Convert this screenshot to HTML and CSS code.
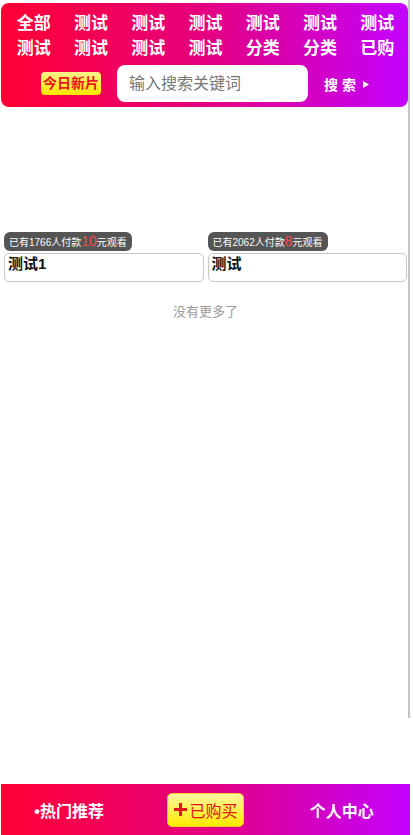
FILE: index.html
```html
<!DOCTYPE html>
<html>
<head>
  <meta charset="utf-8">
  <title>今日新片</title>
  <link rel="stylesheet" href="styles.css">
</head>
<body>
  <div class="app">
    <header class="top">
      <nav class="cats">
        <a href="#">全部</a>
        <a href="#">测试</a>
        <a href="#">测试</a>
        <a href="#">测试</a>
        <a href="#">测试</a>
        <a href="#">测试</a>
        <a href="#">测试</a>
        <a href="#">测试</a>
        <a href="#">测试</a>
        <a href="#">测试</a>
        <a href="#">测试</a>
        <a href="#">分类</a>
        <a href="#">分类</a>
        <a href="#">已购</a>
      </nav>
      <div class="search-row">
        <span class="today">今日新片</span>
        <div class="search-box">
          <input type="text" placeholder="输入搜索关键词">
        </div>
        <span class="search-btn">搜索<svg width="6" height="7" viewBox="0 0 6 7"><path d="M0 0 L6 3.5 L0 7 Z" fill="#fff"/></svg></span>
      </div>
    </header>

    <main class="list">
      <div class="cards">
        <div class="card">
          <div class="thumb"></div>
          <span class="pay-tag">已有1766人付款<em>10</em>元观看</span>
          <div class="card-title">测试1</div>
        </div>
        <div class="card">
          <div class="thumb"></div>
          <span class="pay-tag">已有2062人付款<em>8</em>元观看</span>
          <div class="card-title">测试</div>
        </div>
      </div>
      <p class="no-more">没有更多了</p>
    </main>

    <footer class="tabbar">
      <a href="#" class="tab">&bull;热门推荐</a>
      <a href="#" class="tab"><span class="buy-btn"><svg width="13" height="13" viewBox="0 0 13 13"><path d="M5 0 H8 V5 H13 V8 H8 V13 H5 V8 H0 V5 H5 Z" fill="#e0151b"/></svg>已购买</span></a>
      <a href="#" class="tab">个人中心</a>
    </footer>
  </div>
  <div class="scroll-thumb"></div>
</body>
</html>
```

FILE: styles.css
```css
html, body {
  margin: 0;
  padding: 0;
  height: 100%;
  background-color: #fff;
}

body {
  font-family: "Liberation Sans", "Noto Sans CJK SC", sans-serif;
  overflow: hidden;
}

.app {
  width: 409px;
  height: 835px;
  margin-left: 1px;
  display: flex;
  flex-direction: column;
}

a {
  text-decoration: none;
}

/* header */
.top {
  margin: 3px 2px 0 0;
  padding: 8px 2px 5px 4px;
  border-radius: 8px;
  background: linear-gradient(to right, #ff0033, #e4007f 50%, #c300ff);
  position: relative;
  z-index: 2;
}

.cats {
  display: grid;
  grid-template-columns: repeat(7, 1fr);
}

.cats a {
  color: #fff;
  font-size: 17px;
  font-weight: bold;
  line-height: 25px;
  text-align: center;
}

.search-row {
  display: flex;
  align-items: center;
  height: 37px;
  margin-top: 4px;
  padding-left: 36px;
}

.today {
  display: inline-block;
  height: 23px;
  line-height: 23px;
  padding: 0 2px;
  border-radius: 4px;
  background: linear-gradient(to bottom, #fff38a, #ffe500);
  color: #e8171b;
  font-size: 14px;
  font-weight: bold;
}

.search-box {
  width: 191px;
  height: 37px;
  margin-left: 16px;
  background-color: #fff;
  border-radius: 8px;
}

.search-box input {
  width: 100%;
  height: 100%;
  box-sizing: border-box;
  border: none;
  outline: none;
  background: transparent;
  padding: 0 12px;
  font-family: "Liberation Sans", "Noto Sans CJK SC", sans-serif;
  font-size: 16px;
}

.search-box input::placeholder {
  color: #777;
}

.search-btn {
  margin-left: 16px;
  color: #fff;
  font-size: 14px;
  font-weight: bold;
  letter-spacing: 4px;
  display: flex;
  align-items: center;
}

.search-btn svg {
  margin-left: 3px;
  margin-top: 1px;
}

/* list */
.list {
  flex: 1;
  padding: 4px 3px 0 3px;
}

.cards {
  display: grid;
  grid-template-columns: 1fr 1fr;
  gap: 4px;
}

.thumb {
  height: 121px;
}

.pay-tag {
  display: inline-block;
  height: 19px;
  line-height: 19px;
  padding: 0 5px;
  border-radius: 6px;
  background-color: #555;
  color: #fff;
  font-size: 10px;
}

.pay-tag em {
  font-style: normal;
  color: #ff4646;
  font-size: 14px;
}

.card-title {
  height: 27px;
  margin-top: 2px;
  border: 1px solid #c8c8c8;
  border-radius: 5px;
  padding: 0 3px;
  font-size: 15px;
  font-weight: bold;
  line-height: 19px;
  color: #111;
}

.no-more {
  margin: 19px 0 0;
  text-align: center;
  color: #999;
  font-size: 13px;
}

/* bottom bar */
.tabbar {
  height: 51px;
  display: grid;
  grid-template-columns: repeat(3, 1fr);
  align-items: center;
  background: linear-gradient(to right, #ff0033, #e4007f 50%, #c300ff);
}

.tab {
  text-align: center;
  color: #fff;
  font-size: 16px;
  font-weight: bold;
}

.buy-btn {
  display: inline-flex;
  align-items: center;
  height: 32px;
  padding: 0 5px 0 6px;
  border: 1px solid #f3cf2a;
  border-radius: 5px;
  background: linear-gradient(to bottom, #fff6a0, #ffe900);
  color: #e0151b;
  font-weight: normal;
}

.buy-btn svg {
  margin-right: 2px;
}

.scroll-thumb {
  position: absolute;
  top: 0;
  left: 408px;
  width: 2px;
  height: 718px;
  background-color: #c4c4c4;
}
```
